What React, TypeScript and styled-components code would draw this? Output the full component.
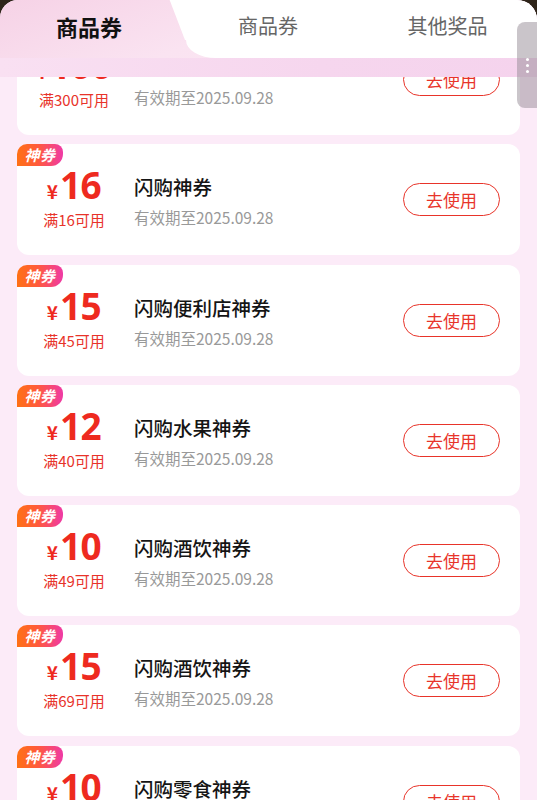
import React from "react";
import styled, { createGlobalStyle } from "styled-components";

const Global = createGlobalStyle`
  html, body { margin: 0; padding: 0; }
  body {
    background: #2e2419;
    font-family: "Noto Sans CJK SC", "Noto Sans", sans-serif;
    -webkit-font-smoothing: antialiased;
  }
  #root { width: 537px; height: 800px; }
`;

const Page = styled.div`
  position: relative;
  width: 537px;
  height: 800px;
  overflow: hidden;
  background: #2e2419;
`;

const Sheet = styled.div`
  position: relative;
  height: 100%;
  border-radius: 18px 20px 0 0;
  overflow: hidden;
  background: #fcebf8;
`;

const Header = styled.div`
  position: absolute;
  top: 0;
  left: 0;
  right: 0;
  z-index: 2;
  display: flex;
  flex-direction: column;
`;

const TabRow = styled.div`
  display: flex;
  height: 58px;
  background: linear-gradient(160deg, #f6d2e6 0%, #fae3f1 45%, #fcebf6 100%);
`;

const ActiveTab = styled.div`
  width: 186px;
  flex-shrink: 0;
  display: flex;
  align-items: center;
  justify-content: center;
  padding: 0 8px 7px 0;
  box-sizing: border-box;
  font-size: 22px;
  font-weight: 700;
  color: #111;
`;

const TabGroup = styled.div`
  position: relative;
  flex: 1;
  display: grid;
  grid-template-columns: 164px 1fr;
  background: #fff;
  border-bottom-left-radius: 30px 18px;

  &::before {
    content: "";
    position: absolute;
    left: -1px;
    top: 0;
    width: 22px;
    height: 40px;
    background: #fff;
    transform-origin: bottom left;
    transform: skewX(21deg);
  }
`;

const Tab = styled.div<{ $shift?: number }>`
  position: relative;
  display: flex;
  align-items: center;
  justify-content: center;
  padding: 0 0 7px ${(p) => p.$shift ?? 0}px;
  font-size: 20px;
  color: #666;
`;

const Band = styled.div`
  height: 19px;
  background: linear-gradient(90deg, #f9e0f2 0%, #f6d6ee 60%, #f5d3ed 100%);
`;

const Handle = styled.div`
  position: absolute;
  z-index: 3;
  right: 0;
  top: 22px;
  width: 20px;
  height: 86px;
  border-radius: 8px 0 0 8px;
  background: rgba(150, 140, 150, 0.5);
  display: flex;
  flex-direction: column;
  align-items: center;
  justify-content: center;
  gap: 3px;
`;

const Dot = styled.span`
  width: 3px;
  height: 3px;
  border-radius: 50%;
  background: #fff;
`;

const List = styled.div`
  display: flex;
  flex-direction: column;
  gap: 9.3px;
  padding: 24px 17px 0;
`;

const Card = styled.div`
  position: relative;
  height: 111px;
  flex-shrink: 0;
  background: #fff;
  border-radius: 12px;
  display: flex;
  align-items: center;
  padding-right: 20px;
`;

const Badge = styled.div`
  position: absolute;
  top: 0;
  left: 0;
  width: 46px;
  height: 22px;
  border-radius: 10px 8px 12px 0;
  background: linear-gradient(90deg, #ff7114 0%, #ff5a3c 45%, #ef3aa6 100%);
  color: #fff;
  font-size: 15px;
  font-weight: 700;
  font-style: italic;
  line-height: 22px;
  text-align: center;
  letter-spacing: 0.5px;
`;

const Left = styled.div`
  width: 114px;
  flex-shrink: 0;
  display: flex;
  flex-direction: column;
  align-items: center;
  margin-top: -4px;
`;

const Price = styled.div`
  display: flex;
  align-items: baseline;
  color: #ee2a1f;
  font-weight: 700;
  line-height: 40px;
  height: 40px;
`;

const Yen = styled.span`
  font-size: 19px;
  margin-right: 2px;
`;

const Amount = styled.span`
  font-family: "Noto Sans", "Liberation Sans", sans-serif;
  font-size: 37px;
  letter-spacing: -0.5px;
`;

const Cond = styled.div`
  margin-top: 5px;
  font-size: 15px;
  line-height: 20px;
  color: #e8332a;
`;

const Info = styled.div`
  flex: 1;
  display: flex;
  flex-direction: column;
  padding-left: 3px;
  gap: 8px;
  padding-top: 3px;
`;

const Title = styled.div`
  font-size: 19.5px;
  line-height: 24px;
  color: #151515;
  font-weight: 500;
`;

const DateText = styled.div`
  font-size: 15.5px;
  line-height: 20px;
  color: #999;
`;

const UseButton = styled.button`
  width: 97px;
  height: 33px;
  border: 1.5px solid #e8342a;
  border-radius: 17px;
  background: #fff;
  color: #e8342a;
  font-family: "Noto Sans CJK SC", sans-serif;
  font-size: 17px;
  line-height: 1;
  padding: 0;
  cursor: pointer;
`;

type Coupon = { amount: string; cond: string; title: string };

const coupons: Coupon[] = [
  { amount: "100", cond: "满300可用", title: "闪购神券" },
  { amount: "16", cond: "满16可用", title: "闪购神券" },
  { amount: "15", cond: "满45可用", title: "闪购便利店神券" },
  { amount: "12", cond: "满40可用", title: "闪购水果神券" },
  { amount: "10", cond: "满49可用", title: "闪购酒饮神券" },
  { amount: "15", cond: "满69可用", title: "闪购酒饮神券" },
  { amount: "10", cond: "满29可用", title: "闪购零食神券" },
];

export default function App() {
  return (
    <>
      <Global />
      <Page>
        <Sheet>
          <Header>
            <TabRow>
              <ActiveTab>商品券</ActiveTab>
              <TabGroup>
                <Tab>商品券</Tab>
                <Tab $shift={8}>其他奖品</Tab>
              </TabGroup>
            </TabRow>
            <Band />
          </Header>
          <Handle>
            <Dot />
            <Dot />
            <Dot />
          </Handle>
          <List>
            {coupons.map((c, i) => (
              <Card key={i}>
                <Badge>神券</Badge>
                <Left>
                  <Price>
                    <Yen>¥</Yen>
                    <Amount>{c.amount}</Amount>
                  </Price>
                  <Cond>{c.cond}</Cond>
                </Left>
                <Info>
                  <Title>{c.title}</Title>
                  <DateText>有效期至2025.09.28</DateText>
                </Info>
                <UseButton>去使用</UseButton>
              </Card>
            ))}
          </List>
        </Sheet>
      </Page>
    </>
  );
}
